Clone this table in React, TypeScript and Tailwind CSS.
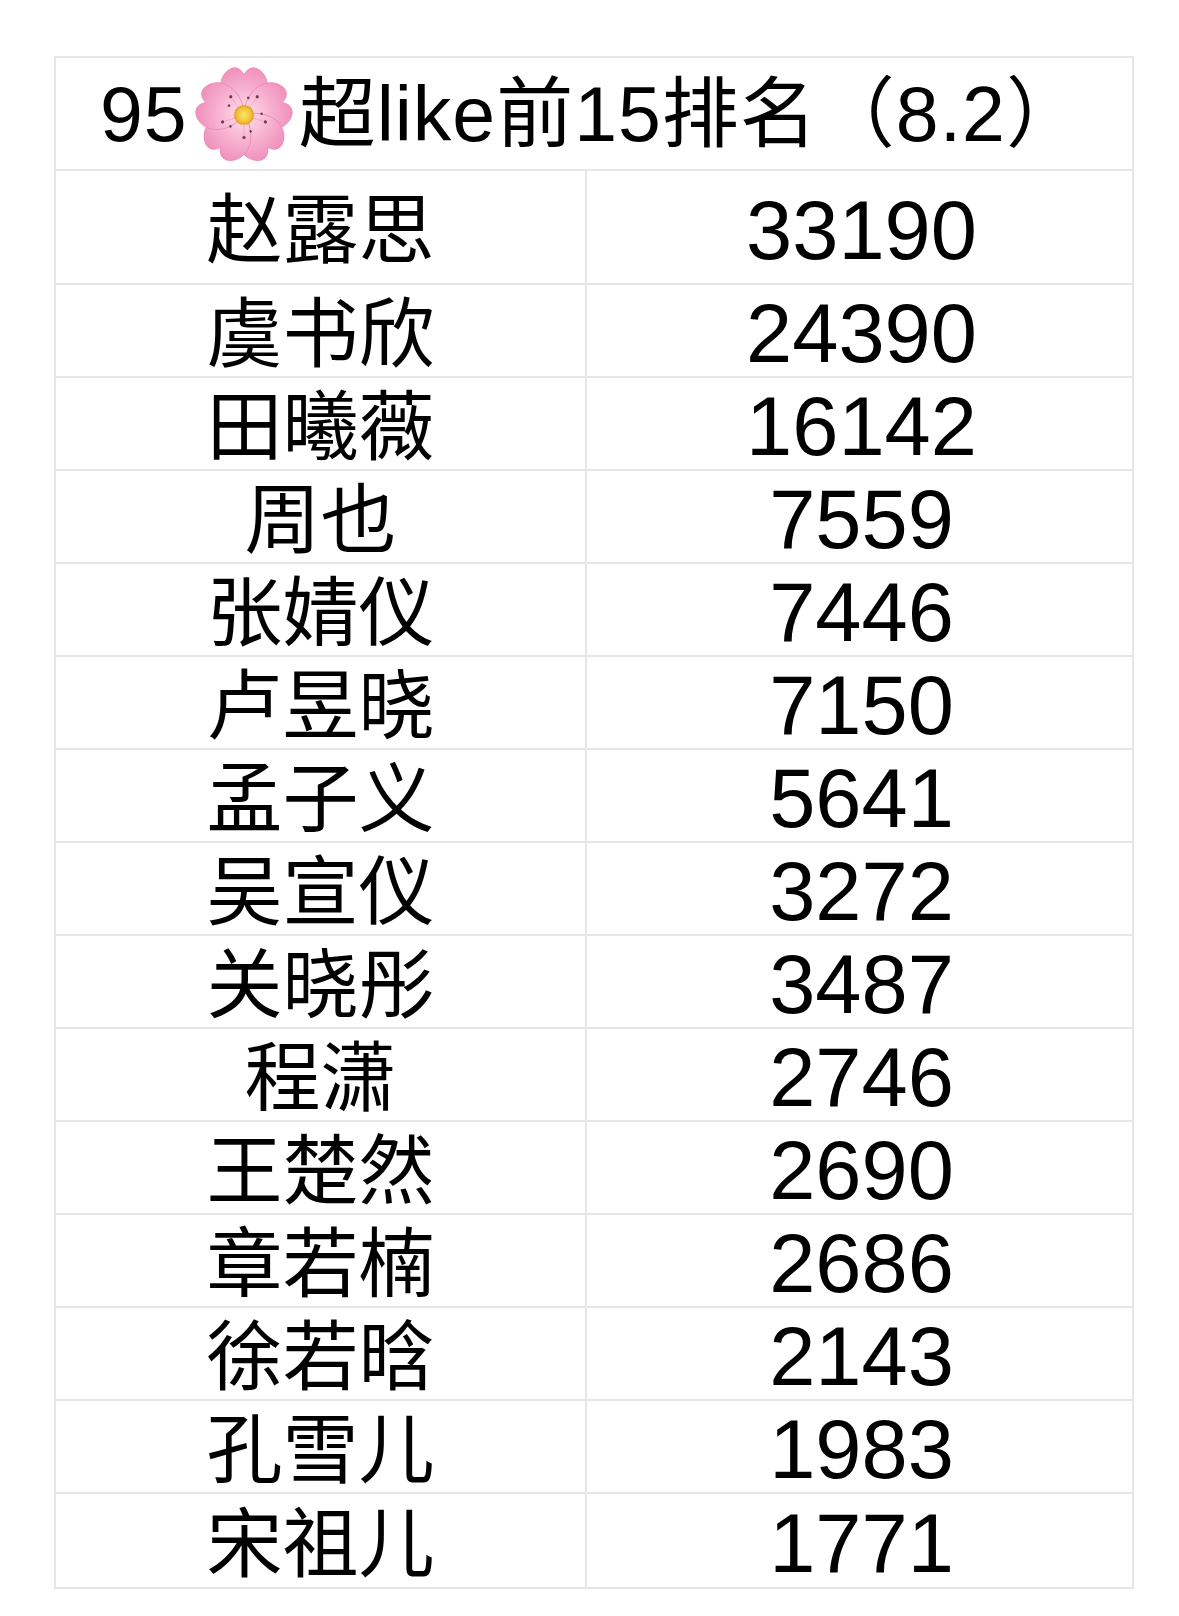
import React from "react";

const rows: [string, string][] = [
  ["赵露思", "33190"],
  ["虞书欣", "24390"],
  ["田曦薇", "16142"],
  ["周也", "7559"],
  ["张婧仪", "7446"],
  ["卢昱晓", "7150"],
  ["孟子义", "5641"],
  ["吴宣仪", "3272"],
  ["关晓彤", "3487"],
  ["程潇", "2746"],
  ["王楚然", "2690"],
  ["章若楠", "2686"],
  ["徐若晗", "2143"],
  ["孔雪儿", "1983"],
  ["宋祖儿", "1771"],
];

function Blossom() {
  const petal =
    "M50 50 C 28 42, 20 20, 31 7 C 38 -1, 46 1, 50 9 C 54 1, 62 -1, 69 7 C 80 20, 72 42, 50 50 Z";
  const angles = [0, 72, 144, 216, 288];
  return (
    <svg width="98" height="98" viewBox="0 0 100 100" className="shrink-0">
      <defs>
        <radialGradient id="pg" cx="50" cy="50" r="50" gradientUnits="userSpaceOnUse">
          <stop offset="0" stopColor="#fde3ee" />
          <stop offset="0.45" stopColor="#f9b9d4" />
          <stop offset="1" stopColor="#ef8fbb" />
        </radialGradient>
        <radialGradient id="yc" cx="50" cy="50" r="10" gradientUnits="userSpaceOnUse">
          <stop offset="0" stopColor="#fbe46a" />
          <stop offset="0.7" stopColor="#f3c437" />
          <stop offset="1" stopColor="#e09a2a" />
        </radialGradient>
      </defs>
      {angles.map((a) => (
        <path
          key={a}
          d={petal}
          fill="url(#pg)"
          stroke="#ea88b4"
          strokeWidth="0.8"
          transform={`rotate(${a} 50 50)`}
        />
      ))}
      {angles.map((a) => (
        <g key={"d" + a} transform={`rotate(${a + 36} 50 50)`}>
          <line x1="50" y1="50" x2="50" y2="27" stroke="#e47aa9" strokeWidth="0.6" opacity="0.6" />
          <circle cx="50" cy="27" r="1.6" fill="#6b3a55" />
        </g>
      ))}
      {angles.map((a) => (
        <g key={"e" + a} transform={`rotate(${a + 14} 50 50)`}>
          <circle cx="50" cy="32" r="1.3" fill="#6b3a55" />
        </g>
      ))}
      <circle cx="50" cy="50" r="10" fill="url(#yc)" />
      <circle cx="50" cy="50" r="10" fill="none" stroke="#e7a73a" strokeWidth="1" strokeDasharray="1.5 1.5" />
    </svg>
  );
}

export default function App() {
  return (
    <div
      className="w-[1179px] h-[1616px] bg-white pt-[56px] pl-[54px] text-black"
      style={{ fontFamily: '"Liberation Sans", "Noto Sans CJK SC", sans-serif' }}
    >
      <div className="w-[1080px] border-2 border-[#e6e6e6]">
        <div className="h-[113px] border-b-2 border-[#e6e6e6] flex items-center justify-start pl-[44px] pt-[2px] text-[77px] leading-none tracking-[1px]">
          <span>95</span>
          <span className="ml-[7px] mr-[6px] flex">
            <Blossom />
          </span>
          <span>超like前15排名（8.2）</span>
        </div>
        {rows.map(([name, num], i) => (
          <div
            key={name}
            className={
              "grid grid-cols-[531px_1fr] " +
              (i === 0 ? "h-[114px] " : "h-[93px] ") +
              (i === rows.length - 1 ? "" : "border-b-2 border-[#e6e6e6]")
            }
          >
            <div className="border-r-2 border-[#e6e6e6] flex items-center justify-center text-[76px] leading-none pt-[8px]">
              {name}
            </div>
            <div className="flex items-center justify-center text-[83px] leading-none pl-[4px] pt-[6px]">
              {num}
            </div>
          </div>
        ))}
      </div>
    </div>
  );
}
